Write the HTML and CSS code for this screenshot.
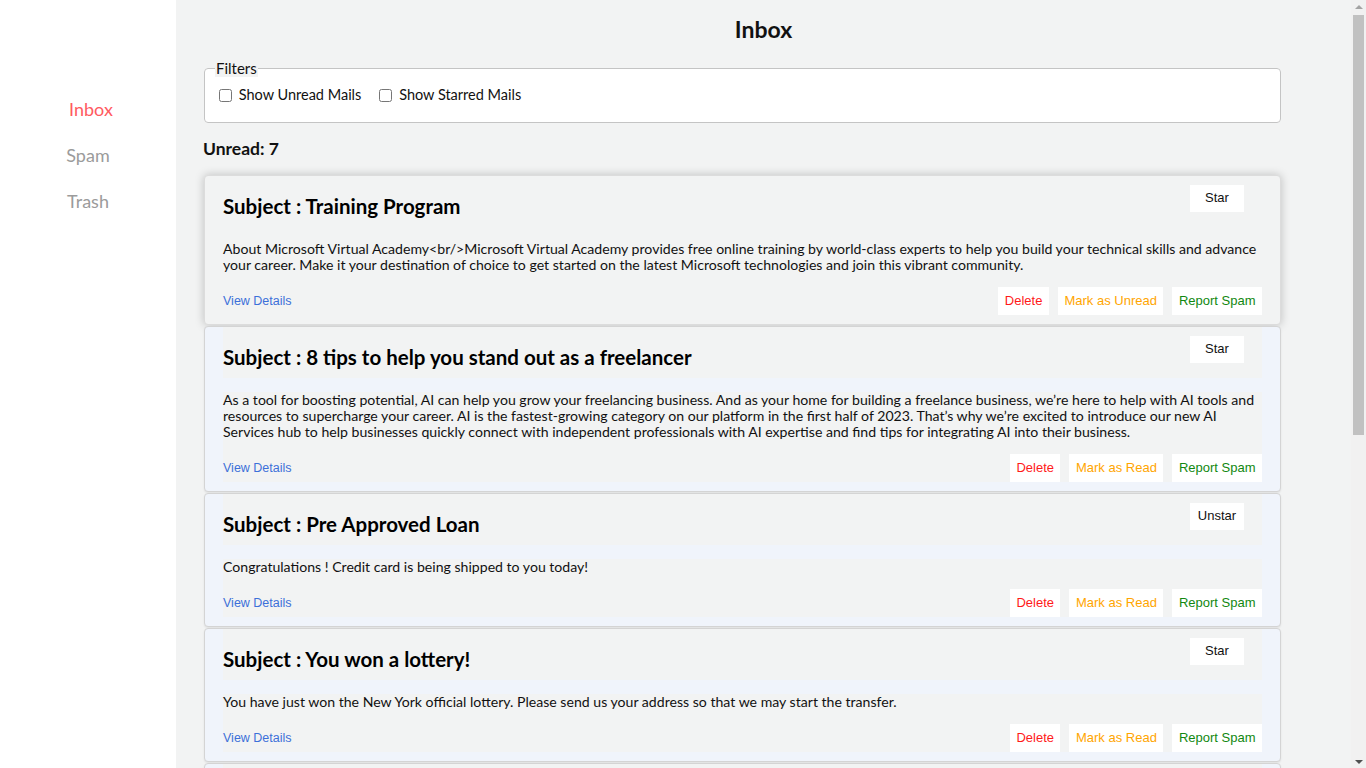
FILE: index.html
```html
<!DOCTYPE html>
<html lang="en">
<head>
<meta charset="utf-8">
<title>Inbox</title>
<link rel="stylesheet" href="styles.css">
</head>
<body>
<div class="app">
  <nav class="sidebar">
    <a class="nav-item active" href="#">Inbox</a>
    <a class="nav-item" href="#">Spam</a>
    <a class="nav-item" href="#">Trash</a>
  </nav>
  <main class="main">
    <h1 class="page-title">Inbox</h1>
    <fieldset class="filters">
      <legend>Filters</legend>
      <label class="filter"><input type="checkbox"> Show Unread Mails</label>
      <label class="filter"><input type="checkbox"> Show Starred Mails</label>
    </fieldset>
    <h3 class="unread">Unread: 7</h3>

    <div class="card read hovered">
      <div class="card-head">
        <h2>Subject : Training Program</h2>
        <button class="star">Star</button>
      </div>
      <div class="card-body">About Microsoft Virtual Academy&lt;br/&gt;Microsoft Virtual Academy provides free online training by world-class experts to help you build your technical skills and advance your career. Make it your destination of choice to get started on the latest Microsoft technologies and join this vibrant community.</div>
      <div class="card-actions">
        <a class="details" href="#">View Details</a>
        <div class="btns">
          <button class="del">Delete</button>
          <button class="mark">Mark as Unread</button>
          <button class="spam">Report Spam</button>
        </div>
      </div>
    </div>

    <div class="card unread-card">
      <div class="card-head">
        <h2>Subject : 8 tips to help you stand out as a freelancer</h2>
        <button class="star">Star</button>
      </div>
      <div class="card-body">As a tool for boosting potential, AI can help you grow your freelancing business. And as your home for building a freelance business, we’re here to help with AI tools and resources to supercharge your career. AI is the fastest-growing category on our platform in the first half of 2023. That’s why we’re excited to introduce our new AI Services hub to help businesses quickly connect with independent professionals with AI expertise and find tips for integrating AI into their business.</div>
      <div class="card-actions">
        <a class="details" href="#">View Details</a>
        <div class="btns">
          <button class="del">Delete</button>
          <button class="mark">Mark as Read</button>
          <button class="spam">Report Spam</button>
        </div>
      </div>
    </div>

    <div class="card unread-card">
      <div class="card-head">
        <h2>Subject : Pre Approved Loan</h2>
        <button class="star">Unstar</button>
      </div>
      <div class="card-body">Congratulations ! Credit card is being shipped to you today!</div>
      <div class="card-actions">
        <a class="details" href="#">View Details</a>
        <div class="btns">
          <button class="del">Delete</button>
          <button class="mark">Mark as Read</button>
          <button class="spam">Report Spam</button>
        </div>
      </div>
    </div>

    <div class="card unread-card">
      <div class="card-head">
        <h2>Subject : You won a lottery!</h2>
        <button class="star">Star</button>
      </div>
      <div class="card-body">You have just won the New York official lottery. Please send us your address so that we may start the transfer.</div>
      <div class="card-actions">
        <a class="details" href="#">View Details</a>
        <div class="btns">
          <button class="del">Delete</button>
          <button class="mark">Mark as Read</button>
          <button class="spam">Report Spam</button>
        </div>
      </div>
    </div>

    <div class="card unread-card">
      <div class="card-head">
        <h2>Subject : Your weekly report</h2>
        <button class="star">Star</button>
      </div>
      <div class="card-body">Here is a summary of your activity for the past week. Open the report to see the details.</div>
      <div class="card-actions">
        <a class="details" href="#">View Details</a>
        <div class="btns">
          <button class="del">Delete</button>
          <button class="mark">Mark as Read</button>
          <button class="spam">Report Spam</button>
        </div>
      </div>
    </div>

    <div class="card unread-card">
      <div class="card-head">
        <h2>Subject : Meeting reminder</h2>
        <button class="star">Star</button>
      </div>
      <div class="card-body">This is a reminder for the team meeting scheduled tomorrow at 10 AM in the main conference room.</div>
      <div class="card-actions">
        <a class="details" href="#">View Details</a>
        <div class="btns">
          <button class="del">Delete</button>
          <button class="mark">Mark as Read</button>
          <button class="spam">Report Spam</button>
        </div>
      </div>
    </div>

    <div class="card unread-card">
      <div class="card-head">
        <h2>Subject : Account security alert</h2>
        <button class="star">Star</button>
      </div>
      <div class="card-body">We noticed a new sign-in to your account from a new device. If this was you, you can ignore this message.</div>
      <div class="card-actions">
        <a class="details" href="#">View Details</a>
        <div class="btns">
          <button class="del">Delete</button>
          <button class="mark">Mark as Read</button>
          <button class="spam">Report Spam</button>
        </div>
      </div>
    </div>

    <div class="card unread-card">
      <div class="card-head">
        <h2>Subject : Your order has shipped</h2>
        <button class="star">Star</button>
      </div>
      <div class="card-body">Good news! Your order is on its way and should arrive within 3 to 5 business days.</div>
      <div class="card-actions">
        <a class="details" href="#">View Details</a>
        <div class="btns">
          <button class="del">Delete</button>
          <button class="mark">Mark as Read</button>
          <button class="spam">Report Spam</button>
        </div>
      </div>
    </div>
  </main>
  <div class="scrollbar" aria-hidden="true">
    <div class="sb-arrow sb-up"></div>
    <div class="sb-thumb"></div>
    <div class="sb-rest"></div>
    <div class="sb-arrow sb-down"></div>
  </div>
</div>
</body>
</html>
```

FILE: styles.css
```css
html, body {
  margin: 0;
  padding: 0;
}
body {
  font-family: Lato, "Open Sans", sans-serif;
  color: #111;
  background: #f2f3f3;
}
.app {
  display: flex;
  align-items: flex-start;
  min-height: 100vh;
}
.sidebar {
  width: 176px;
  flex: 0 0 176px;
  align-self: stretch;
  background: #ffffff;
  display: flex;
  flex-direction: column;
  align-items: center;
  padding-top: 96px;
  box-sizing: border-box;
}
.nav-item {
  font-size: 18px;
  line-height: 26px;
  margin-bottom: 20px;
  color: #9b9b9b;
  text-decoration: none;
}
.nav-item.active {
  color: #ff5a5f;
  margin-left: 6px;
}
.main {
  flex: 1;
  min-width: 0;
  padding: 0 70px 30px 28px;
  background: #f2f3f3;
}
.page-title {
  text-align: center;
  font-size: 23px;
  line-height: 26px;
  font-weight: 700;
  margin: 16px 0 17px 0;
  padding-left: 42px;
}
.filters {
  margin: 0;
  padding: 7px 10px 17px;
  border: 1px solid #c4c4c4;
  border-radius: 4px;
  background: #ffffff;
}
.filters legend {
  font-size: 15px;
  padding: 0 1px;
  background: #f2f3f3;
}
.filter {
  font-size: 14.5px;
  line-height: 20px;
  margin-right: 10px;
}
.filter input {
  margin: 3px 3px 3px 4px;
  vertical-align: -2px;
}
.unread {
  font-size: 17.5px;
  line-height: 20px;
  font-weight: 700;
  margin: 16px 0 16px -1px;
}
.card {
  border: 1px solid #d4d4d4;
  border-radius: 4px;
  padding: 0 18px 9px;
  margin-bottom: 1px;
  box-shadow: 0 1px 2px rgba(0,0,0,0.08);
}
.card.read {
  background: #f2f3f3;
}
.card.unread-card {
  background: #f0f4fb;
}
.card.hovered {
  box-shadow: 0 0 10px rgba(0,0,0,0.22);
  border-color: #dcdcdc;
}
.card-head, .card-body, .card-actions {
  background: #f2f3f3;
}
.card-head {
  display: flex;
  justify-content: space-between;
  align-items: flex-start;
  height: 51px;
}
.card-head h2 {
  margin: 18px 0 0 0;
  font-size: 20.5px;
  line-height: 24px;
  font-weight: 700;
  color: #000;
}
button {
  font-family: "Liberation Sans", Arial, sans-serif;
  font-size: 13px;
  line-height: 16px;
  border: none;
  background: #ffffff;
  padding: 6px 6.5px;
  cursor: pointer;
  color: #111;
}
.star {
  margin: 9px 18px 0 0;
  width: 54px;
  padding: 5px 0 6px;
}
.card-body {
  margin-top: 14px;
  padding-bottom: 14px;
  font-size: 14.1px;
  line-height: 16px;
  color: #111;
}
.card-actions {
  display: flex;
  justify-content: space-between;
  align-items: center;
  height: 28px;
}
.details {
  font-family: "Liberation Sans", Arial, sans-serif;
  font-size: 12.5px;
  color: #3c70d9;
  text-decoration: none;
}
.btns {
  display: flex;
  gap: 9px;
}
.del { color: #ff1a1a; }
.mark { color: #ffa500; }
.spam { color: #118811; }

/* browser-style vertical scrollbar */
.scrollbar {
  flex: 0 0 15px;
  width: 15px;
  height: 100vh;
  position: sticky;
  top: 0;
  background: #f1f1f1;
  display: flex;
  flex-direction: column;
  align-items: center;
}
.sb-arrow {
  height: 15px;
  width: 15px;
  display: flex;
  align-items: center;
  justify-content: center;
  flex: 0 0 15px;
}
.sb-arrow::before {
  content: "";
  width: 0;
  height: 0;
  border-left: 4px solid transparent;
  border-right: 4px solid transparent;
}
.sb-up::before {
  border-bottom: 4px solid #a3a3a3;
  margin-top: -2px;
}
.sb-down::before {
  border-top: 4px solid #505050;
  margin-top: 2px;
}
.sb-thumb {
  width: 11px;
  height: 420px;
  flex: 0 0 420px;
  background: #c1c1c1;
}
.sb-rest {
  flex: 1;
}
```
